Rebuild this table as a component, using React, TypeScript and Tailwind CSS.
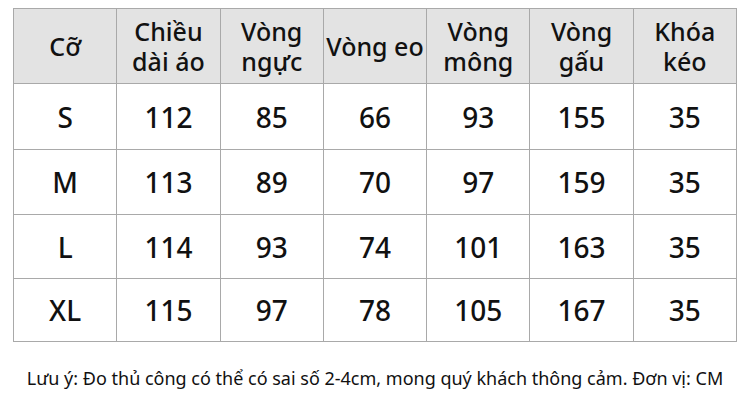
const headers = [
  ['Cỡ'],
  ['Chiều', 'dài áo'],
  ['Vòng', 'ngực'],
  ['Vòng eo'],
  ['Vòng', 'mông'],
  ['Vòng', 'gấu'],
  ['Khóa', 'kéo'],
];

const rows = [
  ['S', '112', '85', '66', '93', '155', '35'],
  ['M', '113', '89', '70', '97', '159', '35'],
  ['L', '114', '93', '74', '101', '163', '35'],
  ['XL', '115', '97', '78', '105', '167', '35'],
];

const rowHeights = ['h-[66px]', 'h-[65px]', 'h-[64px]', 'h-[63px]'];

export default function App() {
  return (
    <div className="h-[409px] w-[750px] bg-white pt-2 font-['Noto_Sans',sans-serif] text-[#111]">
      <div className="mx-[13px] grid grid-cols-7 border-l border-t border-[#a9a9a9]">
        {headers.map((lines, i) => (
          <div
            key={i}
            className="flex h-[75px] flex-col items-center justify-center border-b border-r border-[#a9a9a9] bg-[#e3e3e3] text-[25px] font-medium leading-[30px]"
          >
            {lines.map(line => (
              <span key={line}>{line}</span>
            ))}
          </div>
        ))}
        {rows.map((row, r) =>
          row.map((cell, c) => (
            <div
              key={`${r}-${c}`}
              className={`flex items-center justify-center border-b border-r border-[#a9a9a9] text-[28px] font-medium ${rowHeights[r]}`}
            >
              {cell}
            </div>
          )),
        )}
      </div>
      <p className="mt-[22px] text-center text-[18px] leading-[28px]">
        Lưu ý: Đo thủ công có thể có sai số 2-4cm, mong quý khách thông cảm. Đơn vị: CM
      </p>
    </div>
  );
}
